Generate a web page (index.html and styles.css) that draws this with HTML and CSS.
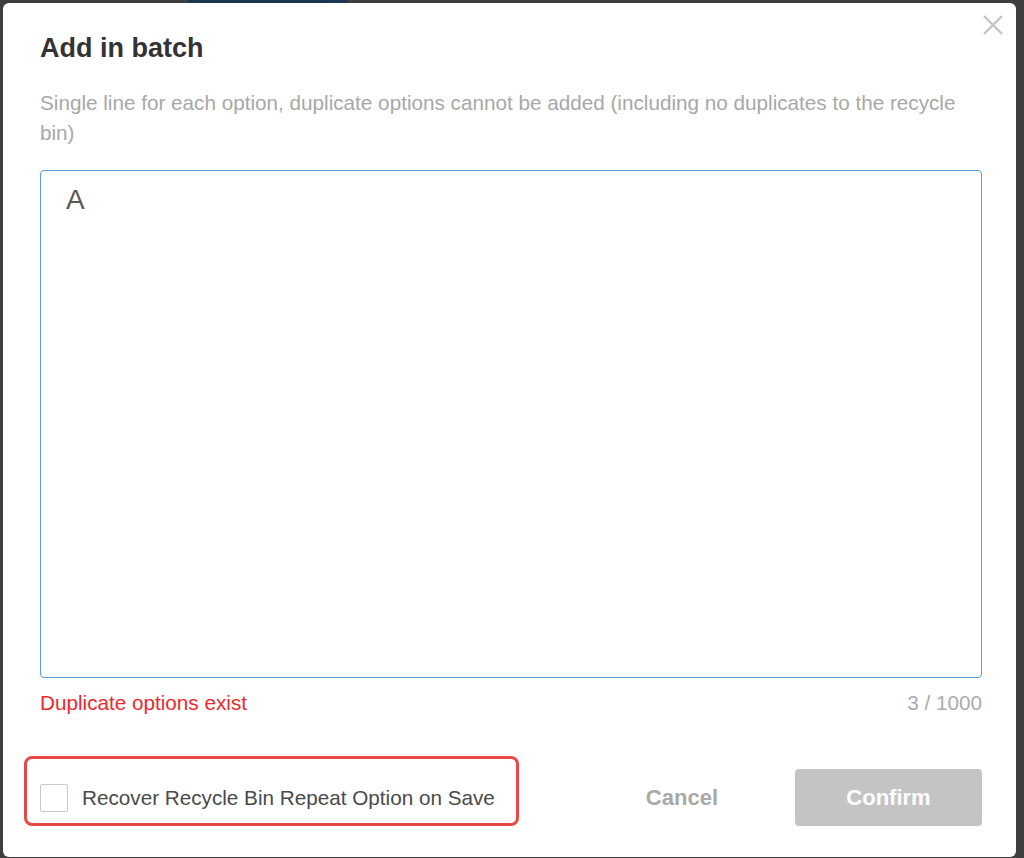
FILE: index.html
```html
<!DOCTYPE html>
<html lang="en">
<head>
    <meta charset="UTF-8">
    <meta name="viewport" content="width=device-width, initial-scale=1.0">
    <title>Add in batch</title>
    <link rel="stylesheet" href="styles.css">
</head>
<body>
    <!-- page behind the mask -->
    <div class="page-tab"></div>

    <div class="modal">
        <button class="close-btn" aria-label="Close">
            <svg width="22" height="22" viewBox="0 0 22 22">
                <path d="M2 2 L20 20 M20 2 L2 20" stroke="#c2c2c2" stroke-width="2.2" fill="none"/>
            </svg>
        </button>

        <h2 class="modal-title">Add in batch</h2>
        <p class="modal-desc">Single line for each option, duplicate options cannot be added (including no duplicates to the recycle bin)</p>

        <textarea class="options-input">A</textarea>

        <div class="input-status">
            <span class="error-text">Duplicate options exist</span>
            <span class="counter">3 / 1000</span>
        </div>

        <div class="modal-footer">
            <label class="recover-option">
                <span class="checkbox"></span>
                <span>Recover Recycle Bin Repeat Option on Save</span>
            </label>
            <div class="actions">
                <button class="btn-cancel">Cancel</button>
                <button class="btn-confirm" disabled>Confirm</button>
            </div>
        </div>
    </div>
</body>
</html>
```

FILE: styles.css
```css
html, body {
    margin: 0;
    height: 100%;
}
body {
    font-family: "Liberation Sans", Arial, sans-serif;
    background-color: #3e3e3e;
    overflow: hidden;
    position: relative;
}
.page-tab {
    position: absolute;
    top: 0;
    left: 188px;
    width: 159px;
    height: 3px;
    background-color: #1d3550;
}
.modal {
    position: relative;
    margin: 3px 8px 0 3px;
    height: 854px;
    box-sizing: border-box;
    padding: 27px 34px 0 37px;
    background-color: #fff;
    border-radius: 6px;
}
.close-btn {
    position: absolute;
    top: 11px;
    right: 12px;
    padding: 0;
    border: none;
    background: none;
    cursor: pointer;
    line-height: 0;
}
.modal-title {
    margin: 0;
    font-size: 27px;
    line-height: 36px;
    font-weight: bold;
    color: #333;
}
.modal-desc {
    margin: 22px 0 0;
    font-size: 20.7px;
    line-height: 30px;
    color: #a8a8a8;
}
.options-input {
    display: block;
    width: 100%;
    height: 508px;
    box-sizing: border-box;
    margin-top: 22px;
    padding: 8px 25px;
    border: 1px solid #5a9fe0;
    border-radius: 4px;
    font-family: "Liberation Sans", Arial, sans-serif;
    font-size: 28px;
    line-height: 42px;
    color: #595959;
    resize: none;
    outline: none;
}
.input-status {
    display: flex;
    justify-content: space-between;
    margin-top: 10px;
    font-size: 20.7px;
    line-height: 30px;
}
.error-text {
    color: #f0282d;
}
.counter {
    color: #ababab;
}
.modal-footer {
    display: flex;
    justify-content: space-between;
    align-items: flex-end;
    margin-top: 38px;
}
.recover-option {
    display: flex;
    align-items: center;
    gap: 14px;
    margin-left: -16px;
    padding: 25px 21px 11px 13px;
    border: 3px solid #e84846;
    border-radius: 8px;
    font-size: 20.7px;
    line-height: 28px;
    color: #4a4a4a;
    cursor: pointer;
}
.checkbox {
    width: 28px;
    height: 28px;
    box-sizing: border-box;
    border: 1px solid #c9c9c9;
    border-radius: 2px;
    background-color: #fff;
}
.actions {
    display: flex;
    align-items: center;
}
.btn-cancel {
    height: 57px;
    padding: 0 28px;
    border: none;
    background: none;
    font-family: "Liberation Sans", Arial, sans-serif;
    font-size: 22px;
    font-weight: bold;
    color: #a9a9a9;
    cursor: pointer;
}
.btn-confirm {
    width: 187px;
    height: 57px;
    margin-left: 49px;
    border: none;
    border-radius: 4px;
    background-color: #c4c4c4;
    font-family: "Liberation Sans", Arial, sans-serif;
    font-size: 22px;
    font-weight: bold;
    color: #fff;
}
```
